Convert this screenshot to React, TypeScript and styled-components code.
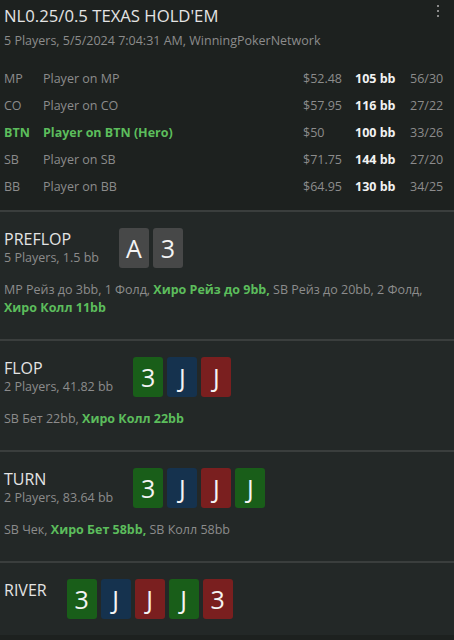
import { Fragment } from "react";
import styled, { createGlobalStyle } from "styled-components";

const GlobalStyle = createGlobalStyle`
  html, body {
    margin: 0;
    padding: 0;
    background-color: #1d211f;
  }
  body {
    font-family: "Open Sans", "Noto Sans", sans-serif;
    color: #dcdcdc;
  }
`;

const Page = styled.div`
  width: 454px;
`;

const Header = styled.header`
  position: relative;
  padding: 5px 11px 10px 4px;
`;

const Title = styled.h1`
  font-size: 16.7px;
  font-weight: 400;
  color: #e4e4e4;
  margin: 0;
  line-height: 22px;
`;

const Subtitle = styled.div`
  font-size: 12.5px;
  color: #8c8c8c;
  margin-top: 5px;
  line-height: 18px;
`;

const MenuButton = styled.div`
  position: absolute;
  top: 5px;
  right: 15px;
  display: flex;
  flex-direction: column;
  gap: 3px;
`;

const Dot = styled.span`
  width: 2px;
  height: 2px;
  background-color: #8a8a8a;
`;

const PlayerTable = styled.div`
  margin-top: 15px;
  display: grid;
  grid-template-columns: 39px 1fr 52px 55px 33px;
  grid-auto-rows: 27px;
  align-items: center;
  font-size: 12.5px;
`;

const Cell = styled.div<{ $hero?: boolean; $bold?: boolean }>`
  color: ${(p) => (p.$hero ? "#5cbd5c" : p.$bold ? "#f2f2f2" : "#8c8c8c")};
  font-weight: ${(p) => (p.$hero || p.$bold ? 700 : 400)};
  white-space: nowrap;
`;

const Section = styled.section<{ $last?: boolean }>`
  background-color: #232827;
  border-top: 2px solid #3a3e3d;
  padding: 16px 4px ${(p) => (p.$last ? "16px" : "22px")};
`;

const StreetRow = styled.div`
  display: flex;
  align-items: center;
  gap: 20px;
`;

const StreetInfo = styled.div`
  display: flex;
  flex-direction: column;
`;

const StreetName = styled.div`
  font-size: 16px;
  color: #e4e4e4;
  line-height: 20px;
`;

const StreetSub = styled.div`
  font-size: 12.5px;
  color: #8c8c8c;
  line-height: 18px;
  min-height: 18px;
`;

const Cards = styled.div`
  display: flex;
  gap: 4px;
`;

const cardColors: Record<string, string> = {
  grey: "#474848",
  green: "#195e19",
  blue: "#15324e",
  red: "#7a1f1f",
};

const Card = styled.div<{ $color: string }>`
  width: 30px;
  height: 40px;
  border-radius: 3px;
  background-color: ${(p) => cardColors[p.$color]};
  color: #f4f4f4;
  font-size: 25px;
  display: flex;
  align-items: center;
  justify-content: center;
`;

const Actions = styled.div`
  margin-top: 13px;
  font-size: 12.5px;
  line-height: 18px;
  color: #8c8c8c;
`;

const HeroAction = styled.span`
  color: #5cbd5c;
  font-weight: 700;
`;

interface Player {
  pos: string;
  name: string;
  stack: string;
  bb: string;
  stats: string;
  hero?: boolean;
}

const players: Player[] = [
  { pos: "MP", name: "Player on MP", stack: "$52.48", bb: "105 bb", stats: "56/30" },
  { pos: "CO", name: "Player on CO", stack: "$57.95", bb: "116 bb", stats: "27/22" },
  { pos: "BTN", name: "Player on BTN (Hero)", stack: "$50", bb: "100 bb", stats: "33/26", hero: true },
  { pos: "SB", name: "Player on SB", stack: "$71.75", bb: "144 bb", stats: "27/20" },
  { pos: "BB", name: "Player on BB", stack: "$64.95", bb: "130 bb", stats: "34/25" },
];

type Action = { text: string; hero?: boolean };

interface Street {
  name: string;
  sub?: string;
  cards: [string, string][];
  actions?: Action[];
}

const streets: Street[] = [
  {
    name: "PREFLOP",
    sub: "5 Players, 1.5 bb",
    cards: [["A", "grey"], ["3", "grey"]],
    actions: [
      { text: "MP Рейз до 3bb, 1 Фолд, " },
      { text: "Хиро Рейз до 9bb,", hero: true },
      { text: " SB Рейз до 20bb, 2 Фолд, " },
      { text: "Хиро Колл 11bb", hero: true },
    ],
  },
  {
    name: "FLOP",
    sub: "2 Players, 41.82 bb",
    cards: [["3", "green"], ["J", "blue"], ["J", "red"]],
    actions: [{ text: "SB Бет 22bb, " }, { text: "Хиро Колл 22bb", hero: true }],
  },
  {
    name: "TURN",
    sub: "2 Players, 83.64 bb",
    cards: [["3", "green"], ["J", "blue"], ["J", "red"], ["J", "green"]],
    actions: [
      { text: "SB Чек, " },
      { text: "Хиро Бет 58bb,", hero: true },
      { text: " SB Колл 58bb" },
    ],
  },
  {
    name: "RIVER",
    cards: [["3", "green"], ["J", "blue"], ["J", "red"], ["J", "green"], ["3", "red"]],
  },
];

function App() {
  return (
    <Page>
      <GlobalStyle />
      <Header>
        <Title>NL0.25/0.5 TEXAS HOLD'EM</Title>
        <Subtitle>5 Players, 5/5/2024 7:04:31 AM, WinningPokerNetwork</Subtitle>
        <MenuButton>
          <Dot />
          <Dot />
          <Dot />
        </MenuButton>
        <PlayerTable>
          {players.map((p) => (
            <Fragment key={p.pos}>
              <Cell $hero={p.hero}>{p.pos}</Cell>
              <Cell $hero={p.hero}>{p.name}</Cell>
              <Cell>{p.stack}</Cell>
              <Cell $bold>{p.bb}</Cell>
              <Cell>{p.stats}</Cell>
            </Fragment>
          ))}
        </PlayerTable>
      </Header>
      {streets.map((s, i) => (
        <Section key={s.name} $last={i === streets.length - 1}>
          <StreetRow>
            <StreetInfo>
              <StreetName>{s.name}</StreetName>
              <StreetSub>{s.sub}</StreetSub>
            </StreetInfo>
            <Cards>
              {s.cards.map(([rank, color], j) => (
                <Card key={j} $color={color}>{rank}</Card>
              ))}
            </Cards>
          </StreetRow>
          {s.actions && (
            <Actions>
              {s.actions.map((a, j) =>
                a.hero ? <HeroAction key={j}>{a.text}</HeroAction> : <span key={j}>{a.text}</span>
              )}
            </Actions>
          )}
        </Section>
      ))}
    </Page>
  );
}

export default App;
